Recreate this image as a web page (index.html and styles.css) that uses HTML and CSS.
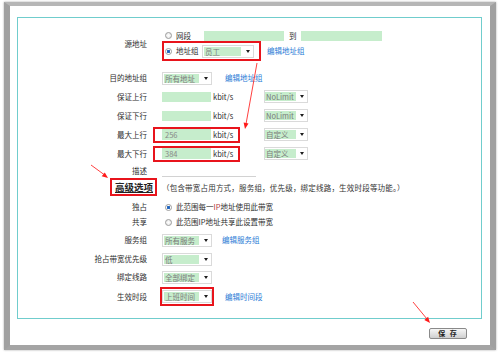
FILE: index.html
```html
<!DOCTYPE html>
<html>
<head>
<meta charset="utf-8">
<link rel="stylesheet" href="styles.css">
</head>
<body>
<div class="panel">
  <div class="box">
    <div class="row r-src">
      <div class="lab lab-src">源地址</div>
      <div class="col">
        <div class="sub1">
          <span class="radio"></span><span class="rtext">网段</span>
          <span class="field f80"></span><span class="to">到</span><span class="field f81"></span>
        </div>
        <div class="line">
          <div class="mark-grp">
            <span class="radio on"></span><span class="rtext">地址组</span>
            <span class="sel s52"><span class="sv w37">员工</span><span class="arr"></span></span>
          </div>
          <a class="lnk l6">编辑地址组</a>
        </div>
      </div>
    </div>

    <div class="row r-dest">
      <div class="lab">目的地址组</div>
      <div class="line">
        <span class="sel s50"><span class="sv w35">所有地址</span><span class="arr"></span></span>
        <a class="lnk l13">编辑地址组</a>
      </div>
    </div>

    <div class="row r-std">
      <div class="lab">保证上行</div>
      <div class="line">
        <span class="field f49"></span><span class="unit">kbit/s</span>
        <span class="sel s44"><span class="sv w31">NoLimit</span><span class="arr"></span></span>
      </div>
    </div>

    <div class="row r-std">
      <div class="lab">保证下行</div>
      <div class="line">
        <span class="field f49"></span><span class="unit">kbit/s</span>
        <span class="sel s44"><span class="sv w31">NoLimit</span><span class="arr"></span></span>
      </div>
    </div>

    <div class="row r-std">
      <div class="lab">最大上行</div>
      <div class="line">
        <div class="mark-bw">
          <span class="field f49 fv">256</span><span class="unit-in">kbit/s</span>
        </div>
        <span class="sel s44 ml24"><span class="sv w31">自定义</span><span class="arr"></span></span>
      </div>
    </div>

    <div class="row r-std">
      <div class="lab">最大下行</div>
      <div class="line">
        <div class="mark-bw">
          <span class="field f49 fv">384</span><span class="unit-in">kbit/s</span>
        </div>
        <span class="sel s44 ml24"><span class="sv w31">自定义</span><span class="arr"></span></span>
      </div>
    </div>

    <div class="row r-desc">
      <div class="lab">描述</div>
      <div class="line"><span class="descline"></span></div>
    </div>

    <div class="row r-adv">
      <div class="lab"><span class="adv">高级选项</span></div>
      <div class="line note">（包含带宽占用方式，服务组，优先级，绑定线路，生效时段等功能。）</div>
    </div>

    <div class="row r-excl">
      <div class="lab">独占</div>
      <div class="line pad3"><span class="radio on"></span><span class="rlong">此范围每一<span class="ip">IP</span>地址使用此带宽</span></div>
    </div>

    <div class="row r-share">
      <div class="lab">共享</div>
      <div class="line pad3"><span class="radio"></span><span class="rlong">此范围IP地址共享此设置带宽</span></div>
    </div>

    <div class="row r-svc">
      <div class="lab">服务组</div>
      <div class="line">
        <span class="sel s50"><span class="sv w35">所有服务</span><span class="arr"></span></span>
        <a class="lnk l10">编辑服务组</a>
      </div>
    </div>

    <div class="row r-pri">
      <div class="lab">抢占带宽优先级</div>
      <div class="line">
        <span class="sel s50"><span class="sv w35">低</span><span class="arr"></span></span>
      </div>
    </div>

    <div class="row r-bind">
      <div class="lab">绑定线路</div>
      <div class="line">
        <span class="sel s50"><span class="sv w35">全部绑定</span><span class="arr"></span></span>
      </div>
    </div>

    <div class="row r-time">
      <div class="lab">生效时段</div>
      <div class="line">
        <div class="mark-time">
          <span class="sel s50"><span class="sv w35">上班时间</span><span class="arr"></span></span>
        </div>
        <a class="lnk l11">编辑时间段</a>
      </div>
    </div>
  </div>
  <div class="foot"><button class="btn">保 存</button></div>
</div>

<svg class="arrows" width="500" height="353" viewBox="0 0 500 353">
  <line x1="257" y1="63" x2="246" y2="124" stroke="#ff2a2a" stroke-width="0.9"/>
  <polygon points="245,129 248.5,123.5 243.6,122.6" fill="#ff1a1a"/>
  <line x1="91" y1="165" x2="104" y2="174.5" stroke="#ff2a2a" stroke-width="0.9"/>
  <polygon points="108,178 101.7,176.3 104.8,172.4" fill="#ff1a1a"/>
  <line x1="413" y1="302" x2="427" y2="319" stroke="#ff2a2a" stroke-width="0.9"/>
  <polygon points="430,323 424.3,319.9 428.1,316.8" fill="#ff1a1a"/>
</svg>
</body>
</html>
```

FILE: styles.css
```css
html, body {
  margin: 0;
  padding: 0;
}
body {
  position: relative;
  width: 500px;
  height: 353px;
  background: #fff;
  font-family: "Noto Sans CJK SC", "Noto Sans", sans-serif;
  font-size: 7.5px;
  color: #2e2e2e;
  overflow: hidden;
}
.panel {
  margin: 2px 4px 0;
  width: 492px;
  height: 348px;
  box-sizing: border-box;
  border-left: 6px solid #a0a0a0;
  border-right: 6px solid #a0a0a0;
  border-top: 4px solid #b6b6b6;
  border-bottom: 5px solid #a4a4a4;
  box-shadow: 0 0 2px rgba(0, 0, 0, 0.35);
  background: #fff;
  padding: 11px 8px 0 7px;
  display: flex;
  flex-direction: column;
}
.box {
  border: 1px solid #70cdcd;
  height: 302px;
  box-sizing: border-box;
  padding-top: 12px;
  display: flex;
  flex-direction: column;
}
.row {
  display: grid;
  grid-template-columns: 129px auto;
  column-gap: 15px;
  align-items: center;
}
.lab {
  text-align: right;
  justify-self: end;
  line-height: 10px;
  white-space: nowrap;
}
.lab-src {
  align-self: start;
  margin-top: 9px;
}
.r-src { height: 31px; align-items: start; }
.r-dest { margin-top: 8px; height: 18px; }
.r-std { height: 19px; }
.r-desc { height: 15px; }
.r-adv { height: 18px; }
.r-excl { margin-top: 2px; height: 18px; }
.r-share { height: 12px; }
.r-svc { margin-top: 3px; height: 18px; }
.r-pri { margin-top: 1px; height: 18px; }
.r-bind { height: 18px; }
.r-time { margin-top: 1px; height: 19px; }

.col {
  display: flex;
  flex-direction: column;
}
.line {
  display: flex;
  align-items: center;
  white-space: nowrap;
}
.sub1 {
  display: flex;
  align-items: center;
  height: 11px;
  padding-left: 3px;
  white-space: nowrap;
}
.radio {
  flex: none;
  width: 7px;
  height: 7px;
  box-sizing: border-box;
  border-radius: 50%;
  border: 1px solid #9c9c9c;
  background: radial-gradient(circle, #ffffff 0, #e2e2e2 100%);
}
.radio.on {
  background: radial-gradient(circle, #1c5fb8 0, #2d6fc4 1.4px, #ffffff 2px);
}
.rtext {
  margin-left: 4px;
  width: 26px;
  line-height: 10px;
}
.rlong {
  margin-left: 4px;
  line-height: 10px;
}
.ip { color: #b33a3a; }
.pad3 { padding-left: 3px; }
.field {
  flex: none;
  display: block;
  height: 10px;
  background: #c6edcc;
}
.f80 { width: 80px; margin-left: 2px; }
.f81 { width: 81px; }
.f49 { width: 49px; }
.fv {
  color: #888;
  padding-left: 3px;
  box-sizing: border-box;
  height: 11px;
  line-height: 11px;
}
.to {
  margin: 0 4px 0 5px;
  line-height: 10px;
}
.unit {
  margin-left: 2px;
  width: 51px;
  line-height: 10px;
}
.unit-in {
  margin-left: 2px;
  line-height: 10px;
}
.mark-grp {
  display: flex;
  align-items: center;
  width: 99px;
  height: 20px;
  box-sizing: border-box;
  border: 2px solid #e8141c;
  padding-left: 1px;
}
.mark-bw {
  display: flex;
  align-items: center;
  width: 87px;
  height: 16px;
  box-sizing: border-box;
  border: 2px solid #e8141c;
  margin-left: -9px;
  padding-left: 7px;
}
.mark-time {
  display: flex;
  align-items: center;
  height: 19px;
  box-sizing: border-box;
  border: 2px solid #e8141c;
  margin-left: -2px;
}
.sel {
  flex: none;
  display: flex;
  align-items: center;
  height: 13px;
  box-sizing: border-box;
  border: 1px solid #dadada;
  padding: 1px;
  background: #fff;
}
.s52 { width: 52px; }
.s50 { width: 50px; }
.s44 { width: 44px; padding-left: 0; }
.ml24 { margin-left: 24px; }
.sv {
  display: block;
  height: 9px;
  line-height: 9px;
  background: #c6edcc;
  color: #7a7a7a;
  padding-left: 1px;
  box-sizing: border-box;
  overflow: hidden;
}
.w37 { width: 37px; }
.w35 { width: 35px; }
.w31 { width: 31px; }
.arr {
  margin-left: auto;
  margin-right: 2px;
  width: 0;
  height: 0;
  border-left: 2.5px solid transparent;
  border-right: 2.5px solid transparent;
  border-top: 3px solid #1e1e1e;
}
.lnk {
  color: #2a7bd6;
  line-height: 10px;
}
.l6 { margin-left: 6px; }
.l10 { margin-left: 10px; }
.l11 { margin-left: 11px; }
.l13 { margin-left: 13px; }
.descline {
  display: block;
  width: 94px;
  height: 12px;
  box-sizing: border-box;
  border-bottom: 1px solid #d2d2d2;
}
.adv {
  display: inline-block;
  height: 18px;
  box-sizing: border-box;
  border: 2px solid #e8141c;
  padding: 0 2px 0 3px;
  margin-right: -10px;
  font-size: 9.5px;
  line-height: 14px;
  font-weight: bold;
  text-decoration: underline;
  color: #222;
}
.note {
  color: #333;
  letter-spacing: 0.2px;
}
.foot {
  display: flex;
  justify-content: flex-end;
  padding-right: 15px;
  margin-top: 9px;
}
.btn {
  width: 38px;
  height: 11px;
  padding: 0;
  margin: 0;
  box-sizing: border-box;
  border: 1px solid #8a8a8a;
  border-radius: 2px;
  background: linear-gradient(#f6f6f6, #cfcfcf);
  font-family: "Noto Sans CJK SC", sans-serif;
  font-size: 7px;
  font-weight: bold;
  letter-spacing: 1px;
  word-spacing: 1px;
  line-height: 9px;
  color: #222;
  white-space: pre;
}
.arrows {
  position: absolute;
  left: 0;
  top: 0;
  pointer-events: none;
}
```
